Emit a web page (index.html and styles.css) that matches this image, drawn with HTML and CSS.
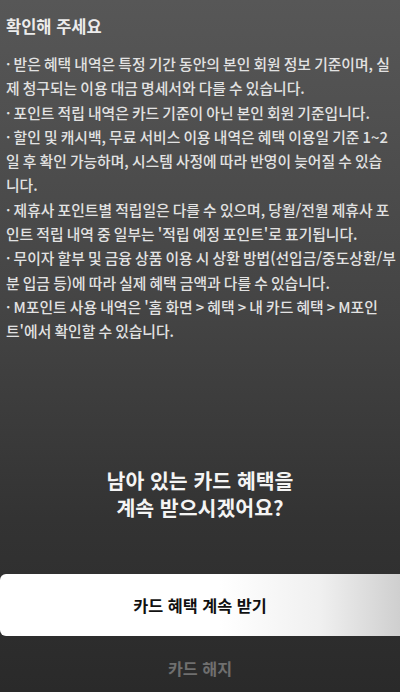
FILE: index.html
```html
<!DOCTYPE html>
<html lang="ko">
  <head>
    <meta charset="UTF-8" />
    <meta name="viewport" content="width=device-width, initial-scale=1.0" />
    <title>카드 해지</title>
    <link rel="stylesheet" href="styles.css">
  </head>
  <body>
    <div class="screen">
      <!-- Notice -->
      <section class="notice">
        <h2>확인해 주세요</h2>
        <ul>
          <li>받은 혜택 내역은 특정 기간 동안의 본인 회원 정보 기준이며, 실<br>제 청구되는 이용 대금 명세서와 다를 수 있습니다.</li>
          <li>포인트 적립 내역은 카드 기준이 아닌 본인 회원 기준입니다.</li>
          <li>할인 및 캐시백, 무료 서비스 이용 내역은 혜택 이용일 기준 1~2<br>일 후 확인 가능하며, 시스템 사정에 따라 반영이 늦어질 수 있습<br>니다.</li>
          <li>제휴사 포인트별 적립일은 다를 수 있으며, 당월/전월 제휴사 포<br>인트 적립 내역 중 일부는 '적립 예정 포인트'로 표기됩니다.</li>
          <li>무이자 할부 및 금융 상품 이용 시 상환 방법(선입금/중도상환/부<br>분 입금 등)에 따라 실제 혜택 금액과 다를 수 있습니다.</li>
          <li>M포인트 사용 내역은 '홈 화면 &gt; 혜택 &gt; 내 카드 혜택 &gt; M포인<br>트'에서 확인할 수 있습니다.</li>
        </ul>
      </section>

      <!-- Actions -->
      <section class="actions">
        <p class="question">남아 있는 카드 혜택을<br>계속 받으시겠어요?</p>
        <button class="btn-keep" type="button">카드 혜택 계속 받기</button>
        <button class="btn-cancel" type="button">카드 해지</button>
      </section>
    </div>
  </body>
</html>
```

FILE: styles.css
```css
/* General Styles */
html,
body {
  margin: 0;
  padding: 0;
}
body {
  font-family: "Noto Sans CJK KR", "Noto Sans", sans-serif;
  background: #2a2a2a;
  color: #e6e6e6;
}
.screen {
  height: 692px;
  display: flex;
  flex-direction: column;
  background: linear-gradient(180deg, #575757 0%, #444 45%, #333 75%, #2a2a2a 100%);
  overflow: hidden;
}

/* Notice */
.notice {
  padding: 15px 0 0 6px;
}
.notice h2 {
  margin: 0 0 15px;
  font-size: 16.5px;
  line-height: 22px;
  font-weight: 700;
  color: #ececec;
}
.notice ul {
  margin: 0;
  padding: 0;
  list-style: none;
}
.notice li {
  font-size: 14.8px;
  line-height: 24.3px;
  font-weight: 500;
  word-spacing: -1px;
  white-space: nowrap;
  color: #e2e2e2;
}
.notice li::before {
  content: "· ";
}

/* Actions */
.actions {
  margin-top: auto;
  display: flex;
  flex-direction: column;
  align-items: stretch;
  padding-bottom: 12px;
}
.question {
  margin: 0 0 53px;
  text-align: center;
  font-size: 20.5px;
  line-height: 27px;
  font-weight: 700;
  color: #f4f4f4;
}
.btn-keep {
  height: 62px;
  border: 0;
  border-radius: 6px 0 0 6px;
  background: linear-gradient(90deg, #fff 0%, #fff 55%, #f0f0f0 80%, #cfcfcf 100%);
  font-family: inherit;
  font-size: 16.3px;
  font-weight: 700;
  color: #111;
}
.btn-cancel {
  margin-top: 20px;
  height: 24px;
  padding: 0;
  border: 0;
  background: none;
  font-family: inherit;
  font-size: 16.2px;
  font-weight: 700;
  color: #6f6f6f;
}
```
